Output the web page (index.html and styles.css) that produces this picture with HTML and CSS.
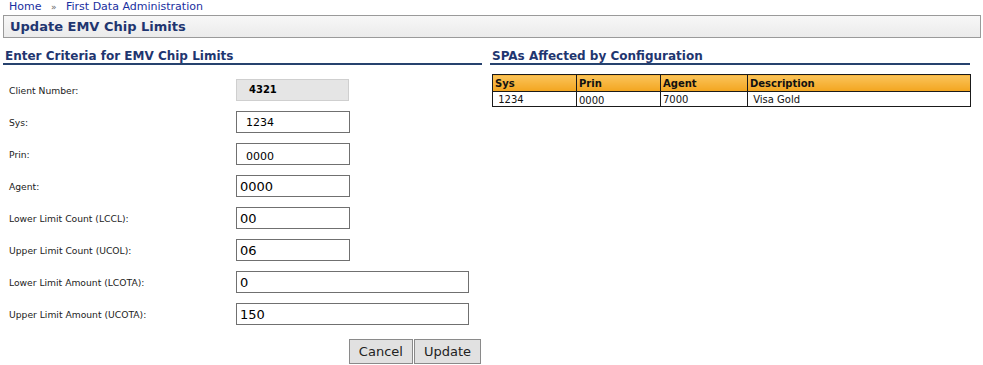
FILE: index.html
```html
<!DOCTYPE html>
<html lang="en">
<head>
    <meta charset="UTF-8">
    <title>Update EMV Chip Limits</title>
    <link rel="stylesheet" href="styles.css">
</head>
<body>
    <div class="crumbs">
        <a href="#">Home</a> <span class="sep">&raquo;</span> <a href="#">First Data Administration</a>
    </div>
    <div class="titlebar">Update EMV Chip Limits</div>

    <div class="columns">
        <div class="left">
            <h2 class="section">Enter Criteria for EMV Chip Limits</h2>
            <form class="criteria">
                <div class="row">
                    <label>Client Number:</label>
                    <div class="readonly">4321</div>
                </div>
                <div class="row">
                    <label>Sys:</label>
                    <input type="text" class="small pad" value="1234">
                </div>
                <div class="row">
                    <label>Prin:</label>
                    <input type="text" class="small pad low" value="0000">
                </div>
                <div class="row">
                    <label>Agent:</label>
                    <input type="text" class="small big" value="0000">
                </div>
                <div class="row">
                    <label>Lower Limit Count (LCCL):</label>
                    <input type="text" class="small big" value="00">
                </div>
                <div class="row">
                    <label>Upper Limit Count (UCOL):</label>
                    <input type="text" class="small big" value="06">
                </div>
                <div class="row">
                    <label>Lower Limit Amount (LCOTA):</label>
                    <input type="text" class="wide big" value="0">
                </div>
                <div class="row">
                    <label>Upper Limit Amount (UCOTA):</label>
                    <input type="text" class="wide big" value="150">
                </div>
                <div class="buttons">
                    <button type="button">Cancel</button><button type="button">Update</button>
                </div>
            </form>
        </div>

        <div class="right">
            <h2 class="section">SPAs Affected by Configuration</h2>
            <table class="spas">
                <thead>
                    <tr>
                        <th class="c1">Sys</th>
                        <th class="c2">Prin</th>
                        <th class="c3">Agent</th>
                        <th>Description</th>
                    </tr>
                </thead>
                <tbody>
                    <tr>
                        <td>&nbsp;1234</td>
                        <td class="low">0000</td>
                        <td>7000</td>
                        <td>&nbsp;Visa Gold</td>
                    </tr>
                </tbody>
            </table>
        </div>
    </div>
</body>
</html>
```

FILE: styles.css
```css
body {
    margin: 0;
    font-family: "DejaVu Sans", Verdana, sans-serif;
    color: #000;
    background: #fff;
}

.crumbs {
    font-size: 11px;
    line-height: 13px;
    padding-left: 9px;
    color: #1a2fa0;
}
.crumbs a {
    color: #1a2fa0;
    text-decoration: none;
}
.crumbs .sep {
    font-size: 9px;
    color: #666;
    margin: 0 6px;
}

.titlebar {
    margin: 1px 2px 0 3px;
    height: 21px;
    border: 1px solid #9a9a9a;
    background: linear-gradient(#f7f7f7, #ebebeb);
    color: #1f3670;
    font-size: 13px;
    font-weight: bold;
    line-height: 21px;
    padding-left: 6px;
}

.columns {
    display: flex;
    padding-top: 12px;
}
.left {
    width: 479px;
    margin-left: 3px;
}
.right {
    width: 480px;
    margin-left: 8px;
}

.section {
    margin: 0;
    font-size: 12px;
    font-weight: bold;
    color: #1f3670;
    line-height: 13px;
    padding: 0 0 0 2px;
    border-bottom: 2px solid #26426e;
}

.criteria {
    padding-top: 9px;
}
.row {
    display: flex;
    align-items: center;
    height: 32px;
}
.row label {
    box-sizing: border-box;
    width: 233px;
    padding-left: 6px;
    font-size: 9.2px;
    color: #222;
}
.readonly {
    box-sizing: border-box;
    width: 113px;
    height: 22px;
    background: #e5e5e5;
    border: 1px solid #cfcfcf;
    font-size: 10px;
    font-weight: bold;
    padding-left: 12px;
    line-height: 20px;
}
.row input {
    box-sizing: border-box;
    height: 22px;
    border: 1px solid #707070;
    margin: 0;
    font-family: "DejaVu Sans", Verdana, sans-serif;
    color: #000;
    outline: none;
}
.small {
    width: 114px;
}
.wide {
    width: 233px;
}
.pad {
    font-size: 11px;
    padding: 0 0 0 9px;
}
.pad.low {
    padding-top: 4px;
}
.big {
    font-size: 13px;
    padding: 0 0 0 3px;
}

.buttons {
    display: flex;
    justify-content: flex-end;
    padding: 9px 1px 0 0;
}
.buttons button {
    height: 25px;
    border: 1px solid #8a8a8a;
    background: #e1e1e1;
    font-family: "DejaVu Sans", Verdana, sans-serif;
    font-size: 13px;
    color: #222;
    padding: 0 9px;
    margin: 0 0 0 1px;
}

.spas {
    margin: 9px 0 0 2px;
    width: 479px;
    border-collapse: collapse;
    border: 1px solid #1a1a1a;
    font-size: 10px;
}
.spas th {
    text-align: left;
    height: 16px;
    padding: 0 0 0 2px;
    background: linear-gradient(#fbc45a, #f3a51f);
    border: 1px solid #1a1a1a;
    font-weight: bold;
    color: #111;
}
.spas td {
    height: 14px;
    padding: 0 0 0 2px;
    border: 1px solid #1a1a1a;
    color: #111;
}
.spas td.low {
    vertical-align: bottom;
}
.c1 { width: 81px; }
.c2 { width: 81px; }
.c3 { width: 84px; }
```
